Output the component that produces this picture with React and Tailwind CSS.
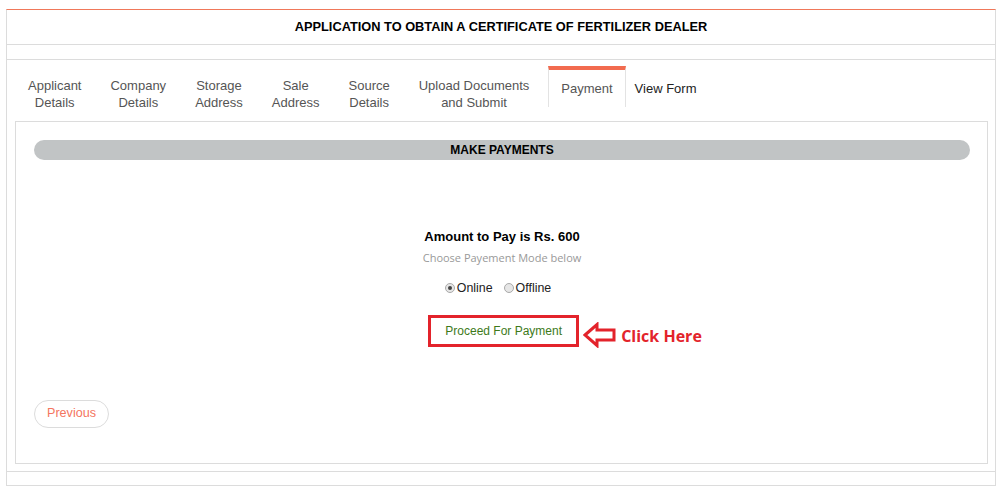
import { useState } from "react";

const tabs = [
  ["Applicant", "Details"],
  ["Company", "Details"],
  ["Storage", "Address"],
  ["Sale", "Address"],
  ["Source", "Details"],
  ["Upload Documents", "and Submit"],
];

function Radio({ checked, label, onClick }) {
  return (
    <label onClick={onClick} className="flex items-center cursor-pointer">
      <span className="w-[10px] h-[10px] rounded-full border border-[#a9a9a9] bg-[#e6e6e6] flex items-center justify-center">
        {checked && <span className="w-[4px] h-[4px] rounded-full bg-[#444]" />}
      </span>
      <span className="ml-[2px]">{label}</span>
    </label>
  );
}

export default function App() {
  const [mode, setMode] = useState("online");

  return (
    <div className="min-h-[497px] bg-white pt-[9px] pl-[6px] pr-[7px] font-['Liberation_Sans',Arial,sans-serif] text-[13px] text-[#333]">
      <div className="border border-[#dcdcdc] border-t-[#f0785a]">
        {/* Title */}
        <div className="h-[35px] flex items-center justify-center border-b border-[#dcdcdc] font-bold text-[12.8px] text-black">
          APPLICATION TO OBTAIN A CERTIFICATE OF FERTILIZER DEALER
        </div>
        <div className="h-[15px] border-b border-[#dcdcdc]" />

        <div className="pl-[8px] pr-[7px] pb-[7px]">
          {/* Tabs */}
          <div className="flex h-[61px] pt-[17px] items-start -ml-[1.5px]">
            {tabs.map((t) => (
              <div key={t[0]} className="px-[14.5px] text-center leading-[17px] text-[#555]">
                <div>{t[0]}</div>
                <div>{t[1]}</div>
              </div>
            ))}
            <div className="ml-[4.5px] -mt-[11px] h-[41px] border-x border-[#e3e3e3] border-t-[4px] border-t-[#f26b4f] px-[12px] pt-[9px] text-[#555]">
              Payment
            </div>
            <div className="ml-[9px] pt-[2px] text-[#222]">View Form</div>
          </div>

          {/* Panel */}
          <div className="h-[343px] border border-[#dcdcdc] pl-[18px] pr-[17px] pt-[18px] flex flex-col">
            <div className="h-[20px] rounded-full bg-[#c1c4c5] flex items-center justify-center font-bold text-[12px] text-black">
              MAKE PAYMENTS
            </div>

            <div className="flex flex-col items-center">
              <div className="mt-[67px] font-bold text-black">Amount to Pay is Rs. 600</div>
              <div className="mt-[3px] text-[11px] text-[#999] font-['Open_Sans',sans-serif]">
                Choose Payement Mode below
              </div>
              <div className="mt-[13px] -ml-[8px] flex gap-[11px] text-[12.4px] text-[#222]">
                <Radio checked={mode === "online"} label="Online" onClick={() => setMode("online")} />
                <Radio checked={mode === "offline"} label="Offline" onClick={() => setMode("offline")} />
              </div>
              <div className="mt-[17px] ml-[126px] flex items-center">
                <button className="w-[151px] h-[32px] border-[3px] border-[#e3232b] text-[12px] text-[#3d7a1a] pb-[1px]">
                  Proceed For Payment
                </button>
                <svg width="34" height="26" viewBox="0 0 34 26" className="ml-[4px] mt-[7px]">
                  <path
                    d="M2 13 L14 2.5 L14 8 L31 8 L31 18 L14 18 L14 23.5 Z"
                    fill="none"
                    stroke="#e3232b"
                    strokeWidth="3"
                    strokeLinejoin="miter"
                  />
                </svg>
                <span className="ml-[4px] mt-[9px] font-['Open_Sans',sans-serif] font-bold text-[16px] text-[#e3232b]">
                  Click Here
                </span>
              </div>
            </div>

            <div className="mt-[52px]">
              <button className="h-[28px] px-[12px] rounded-full border border-[#dcdcdc] text-[12.6px] text-[#f47560]">
                Previous
              </button>
            </div>
          </div>
        </div>

        <div className="h-[14px] border-t border-[#dcdcdc]" />
      </div>
    </div>
  );
}
